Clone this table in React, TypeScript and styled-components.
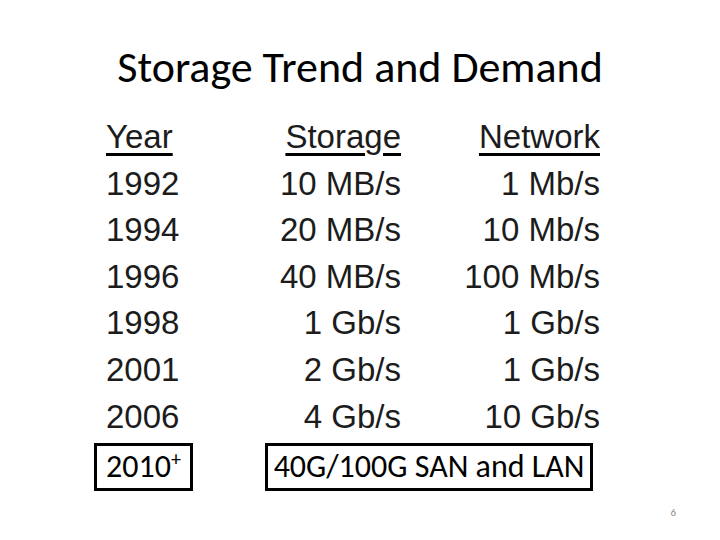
import React from "react";
import styled, { createGlobalStyle } from "styled-components";

const GlobalStyle = createGlobalStyle`
  html, body {
    margin: 0;
    padding: 0;
    background: #ffffff;
  }
`;

const CALIBRI = `"Carlito", "Open Sans", "Noto Sans", sans-serif`;
const ARIAL = `"Liberation Sans", Arial, sans-serif`;

const Slide = styled.div`
  width: 720px;
  height: 540px;
  box-sizing: border-box;
  display: flex;
  flex-direction: column;
  background: #ffffff;
  color: #000;
`;

const Title = styled.h1`
  margin: 0;
  padding-top: 42px;
  height: 70px;
  box-sizing: border-box;
  text-align: center;
  font-family: ${CALIBRI};
  font-weight: normal;
  font-size: 44px;
  line-height: 50px;
`;

const Table = styled.div`
  display: grid;
  grid-template-columns: 94px 201px 199px;
  grid-auto-rows: 46.6px;
  margin-top: 44px;
  padding-left: 106px;
  font-family: ${ARIAL};
  font-size: 33px;
  line-height: 46.6px;
  color: #1c1c1c;
`;

const Cell = styled.div<{ $align: "start" | "end" }>`
  justify-self: ${p => p.$align};
  white-space: nowrap;
`;

const Head = styled.span`
  text-decoration: underline;
  text-decoration-thickness: 3px;
  text-underline-offset: 5px;
  text-decoration-color: #000;
`;

const Footer = styled.div`
  display: flex;
  align-items: center;
  margin-top: 3px;
  padding-left: 94px;
  gap: 72px;
`;

const Boxed = styled.div<{ $width: number }>`
  width: ${p => p.$width}px;
  height: 48px;
  box-sizing: border-box;
  border: 3px solid #000;
  display: flex;
  align-items: center;
  justify-content: center;
  font-family: ${CALIBRI};
  font-size: 32px;
  color: #000;
  white-space: nowrap;
`;

const Label = styled.span`
  line-height: 40px;
`;

const Sup = styled.sup`
  font-size: 20px;
  line-height: 0;
  vertical-align: 11px;
`;

const PageNum = styled.div`
  align-self: flex-end;
  margin-top: 15px;
  margin-right: 44px;
  font-family: ${CALIBRI};
  font-size: 11px;
  color: #8a8a8a;
`;

const rows: [string, string, string][] = [
  ["1992", "10 MB/s", "1 Mb/s"],
  ["1994", "20 MB/s", "10 Mb/s"],
  ["1996", "40 MB/s", "100 Mb/s"],
  ["1998", "1 Gb/s", "1 Gb/s"],
  ["2001", "2 Gb/s", "1 Gb/s"],
  ["2006", "4 Gb/s", "10 Gb/s"],
];

export default function App() {
  return (
    <Slide>
      <GlobalStyle />
      <Title>Storage Trend and Demand</Title>
      <Table>
        <Cell $align="start">
          <Head>Year</Head>
        </Cell>
        <Cell $align="end">
          <Head>Storage</Head>
        </Cell>
        <Cell $align="end">
          <Head>Network</Head>
        </Cell>
        {rows.map(([year, storage, network]) => (
          <React.Fragment key={year}>
            <Cell $align="start">{year}</Cell>
            <Cell $align="end">{storage}</Cell>
            <Cell $align="end">{network}</Cell>
          </React.Fragment>
        ))}
      </Table>
      <Footer>
        <Boxed $width={99}>
          <Label>
            2010<Sup>+</Sup>
          </Label>
        </Boxed>
        <Boxed $width={328}>
          <Label>40G/100G SAN and LAN</Label>
        </Boxed>
      </Footer>
      <PageNum>6</PageNum>
    </Slide>
  );
}
